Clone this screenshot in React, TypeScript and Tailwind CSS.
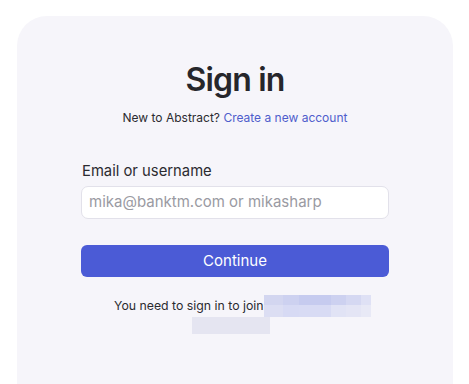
import React from "react";

const top = ["#d3d6f0", "#cdd1f0", "#c6cbef", "#cdd1f0", "#d5d8f2", "#dfe1f5"];
const bot = ["#dcdef3", "#d7daf4", "#d8dbf4", "#e1e3f5", "#e4e5f5", "#e8e9f6"];
const widths = [19, 16, 32, 15, 15, 10];

export default function App() {
  return (
    <div
      className="w-[469px] h-[384px] overflow-hidden bg-white pt-[16px] pl-[17px]"
      style={{ fontFamily: "Inter, 'Noto Sans', sans-serif" }}
    >
      <div className="w-[436px] h-[420px] rounded-[30px] bg-[#f6f5fa] px-[64px] pt-[44px] flex flex-col">
        <h1 className="text-center text-[32px] leading-[40px] font-semibold text-[#26262b] tracking-[-0.8px]">
          Sign in
        </h1>
        <p className="mt-[10px] text-center text-[12px] leading-[16px] text-[#2b2b30]">
          New to Abstract?{" "}
          <span className="text-[#4f5dcc]">Create a new account</span>
        </p>
        <label className="mt-[35px] pl-[1px] text-[14.8px] leading-[20px] text-[#2b2b30]">
          Email or username
        </label>
        <div className="mt-[5px] h-[33px] rounded-[7px] border border-[#e2e1ea] bg-white flex items-center px-[7px] text-[15px] text-[#9a9aa2]">
          mika@banktm.com or mikasharp
        </div>
        <button className="mt-[26px] h-[32px] rounded-[6px] bg-[#4b5bd6] text-white text-[15px] flex items-center justify-center">
          Continue
        </button>
        <div className="mt-[18px] flex flex-col items-start">
          <div className="ml-[33px] flex items-start">
            <span className="text-[12.3px] leading-[16px] text-[#2b2b30] pt-[3px]">
              You need to sign in to join
            </span>
            <div className="flex flex-col">
              <div className="flex">
                {top.map((c, i) => (
                  <div key={i} className="h-[10px]" style={{ width: widths[i], background: c }} />
                ))}
              </div>
              <div className="flex">
                {bot.map((c, i) => (
                  <div key={i} className="h-[12px]" style={{ width: widths[i], background: c }} />
                ))}
              </div>
            </div>
          </div>
          <div className="ml-[111px] w-[78px] h-[17px] bg-[#e5e5f1]" />
        </div>
      </div>
    </div>
  );
}
